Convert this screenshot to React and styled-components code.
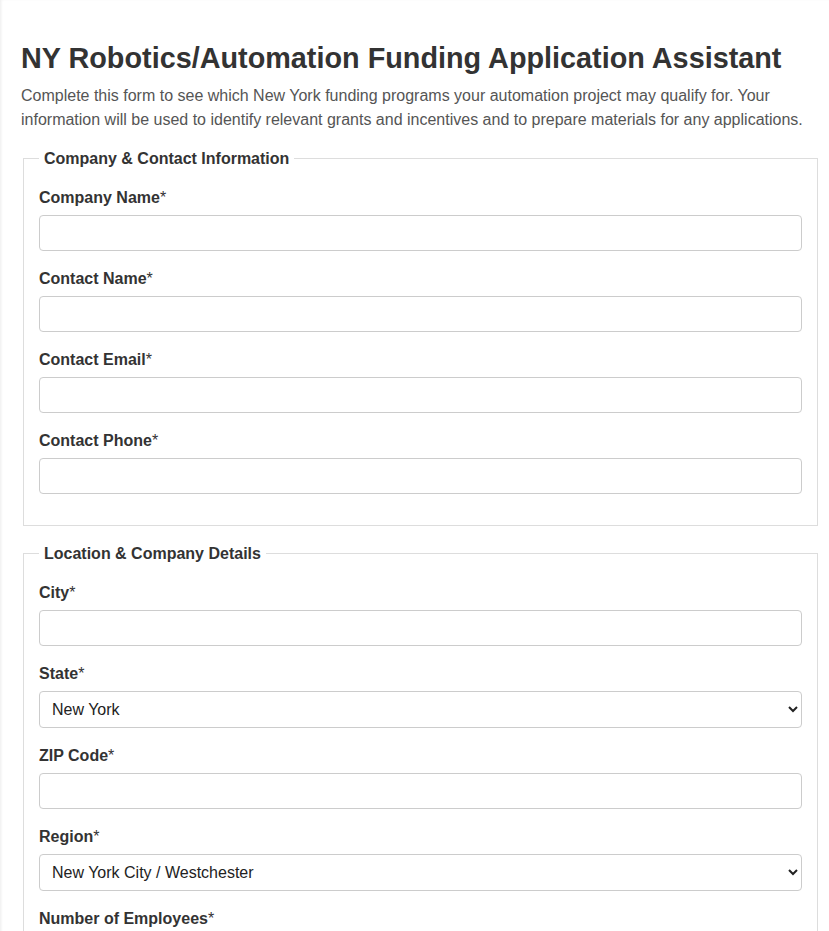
import React from "react";
import styled, { createGlobalStyle } from "styled-components";

const GlobalStyle = createGlobalStyle`
    html, body {
        margin: 0;
        padding: 0;
        background: #fff;
    }
    body {
        font-family: "Liberation Sans", Arial, sans-serif;
        color: #333;
    }
`;

const Page = styled.div`
    box-sizing: border-box;
    width: 829px;
    padding: 42px 9px 40px 21px;
    box-shadow: inset 2px 0 3px -1px rgba(0, 0, 0, 0.08);
`;

const Title = styled.h1`
    margin: 0 0 10px 0;
    font-size: 28.8px;
    line-height: 32px;
    font-weight: 700;
    color: #333;
`;

const Intro = styled.p`
    margin: 0 0 17px 0;
    font-size: 16px;
    line-height: 24px;
    color: #555;
`;

const Section = styled.fieldset`
    margin: 0 2px 18px 2px;
    padding: 20px 15px 13px 15px;
    border: 1px solid #ddd;
    min-width: 0;
`;

const Legend = styled.legend`
    padding: 0 5px;
    margin-left: 0;
    font-size: 16px;
    line-height: 19px;
    font-weight: 700;
    color: #333;
`;

const Field = styled.div`
    margin-bottom: 18px;
`;

const Label = styled.label`
    display: block;
    margin-bottom: 8px;
    font-size: 16px;
    line-height: 19px;
    font-weight: 700;
    color: #333;
`;

const Req = styled.span`
    font-weight: 400;
`;

const TextInput = styled.input`
    display: block;
    box-sizing: border-box;
    width: 100%;
    height: 36px;
    padding: 8px 12px;
    border: 1px solid #ccc;
    border-radius: 4px;
    background: #fff;
    font-family: "Liberation Sans", Arial, sans-serif;
    font-size: 16px;
    color: #222;
`;

const Select = styled.select`
    display: block;
    box-sizing: border-box;
    width: 100%;
    height: 37px;
    padding: 0 8px 0 8px;
    border: 1px solid #ccc;
    border-radius: 4px;
    background: #fff;
    font-family: "Liberation Sans", Arial, sans-serif;
    font-size: 16px;
    color: #222;
`;

const TextField = ({ label, type = "text" }) => (
    <Field>
        <Label>
            {label}
            <Req>*</Req>
        </Label>
        <TextInput type={type} />
    </Field>
);

const SelectField = ({ label, options, value }) => (
    <Field>
        <Label>
            {label}
            <Req>*</Req>
        </Label>
        <Select defaultValue={value}>
            {options.map((o) => (
                <option key={o} value={o}>
                    {o}
                </option>
            ))}
        </Select>
    </Field>
);

const states = ["New York", "New Jersey", "Connecticut", "Pennsylvania", "Other"];
const regions = [
    "New York City / Westchester",
    "Long Island",
    "Mid-Hudson",
    "Capital Region",
    "Central New York",
    "Finger Lakes",
    "Western New York",
    "Southern Tier",
    "Mohawk Valley",
    "North Country",
];

export default function App() {
    return (
        <>
            <GlobalStyle />
            <Page>
                <Title>NY Robotics/Automation Funding Application Assistant</Title>
                <Intro>
                    Complete this form to see which New York funding programs your automation
                    project may qualify for. Your information will be used to identify relevant
                    grants and incentives and to prepare materials for any applications.
                </Intro>
                <form>
                    <Section>
                        <Legend>Company &amp; Contact Information</Legend>
                        <TextField label="Company Name" />
                        <TextField label="Contact Name" />
                        <TextField label="Contact Email" type="email" />
                        <TextField label="Contact Phone" type="tel" />
                    </Section>
                    <Section>
                        <Legend>Location &amp; Company Details</Legend>
                        <TextField label="City" />
                        <SelectField label="State" options={states} value="New York" />
                        <TextField label="ZIP Code" />
                        <SelectField
                            label="Region"
                            options={regions}
                            value="New York City / Westchester"
                        />
                        <TextField label="Number of Employees" type="number" />
                    </Section>
                </form>
            </Page>
        </>
    );
}
